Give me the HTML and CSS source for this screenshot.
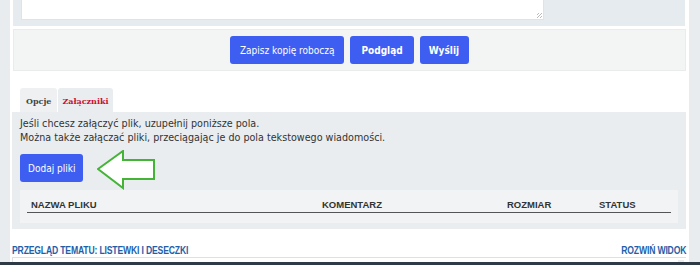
FILE: index.html
```html
<!DOCTYPE html>
<html lang="pl">
<head>
  <meta charset="UTF-8" />
  <title>Odpowiedz</title>
  <link rel="stylesheet" href="styles.css">
</head>
<body>
  <div class="page">

    <!-- Edytor -->
    <div class="editor">
      <div class="textarea"><span class="grip"></span></div>
    </div>

    <!-- Przyciski -->
    <div class="submit-bar">
      <button class="btn">Zapisz kopię roboczą</button>
      <button class="btn strong">Podgląd</button>
      <button class="btn strong">Wyślij</button>
    </div>

    <!-- Zakładki -->
    <ul class="tabs">
      <li class="tab">Opcje</li>
      <li class="tab active">Załączniki</li>
    </ul>

    <div class="panel">
      <p>Jeśli chcesz załączyć plik, uzupełnij poniższe pola.<br>
      Można także załączać pliki, przeciągając je do pola tekstowego wiadomości.</p>

      <div class="add-row">
        <button class="btn small">Dodaj pliki</button>
        <svg class="arrow" width="60" height="40" viewBox="0 0 60 40">
          <polygon points="1,19 26,1 26,10 57,10 57,29 26,29 26,38" fill="#fff" stroke="#44b437" stroke-width="2" />
        </svg>
      </div>

      <div class="files">
        <div class="files-head">
          <span class="col-name">Nazwa pliku</span>
          <span class="col-comment">Komentarz</span>
          <span class="col-size">Rozmiar</span>
          <span class="col-status">Status</span>
        </div>
      </div>
    </div>

    <!-- Przeglad tematu -->
    <div class="review">
      <a href="#" class="review-left">Przegląd tematu: Listewki i deseczki</a>
      <a href="#" class="review-right">Rozwiń widok</a>
    </div>
    <div class="review-box"><span class="scroll-up"></span></div>
  </div>
  <div class="taskbar"></div>
</body>
</html>
```

FILE: styles.css
```css
body {
  margin: 0;
  background-color: #e8ecef;
  font-family: "DejaVu Sans", Verdana, sans-serif;
  color: #333;
  width: 700px;
  height: 265px;
  overflow: hidden;
  position: relative;
}
.page {
  margin-left: 10px;
  width: 679px;
  height: 265px;
  background: #fff;
  padding: 0 3px 0 2px;
  box-sizing: border-box;
}
.editor {
  background: #e6ebef;
  height: 26px;
  padding: 0 141px 0 8px;
  margin: 0 1px 0 1px;
  box-sizing: border-box;
}
.textarea {
  position: relative;
  height: 20px;
  background: #fff;
  border: 1px solid #dfe3e6;
  border-top: none;
  box-sizing: border-box;
}
.grip {
  position: absolute;
  right: 1px;
  bottom: 1px;
  width: 5px;
  height: 5px;
  background: repeating-linear-gradient(135deg, transparent 0 1px, #bbb 1px 2px);
}
.submit-bar {
  margin: 3px 0 0 1px;
  background: #f3f4f4;
  border: 1px solid #e9ebec;
  height: 42px;
  box-sizing: border-box;
  display: flex;
  justify-content: center;
  align-items: center;
  gap: 6px;
}
.btn {
  background: #3d5ef0;
  color: #fff;
  border: none;
  border-radius: 3px;
  height: 28px;
  padding: 0 10px;
  font-family: "DejaVu Sans Condensed", "DejaVu Sans", sans-serif;
  font-size: 10px;
  cursor: pointer;
}
.btn.strong {
  font-weight: bold;
  padding: 0 11px 0 11px;
}
.btn.strong:last-child {
  padding: 0 10px 0 9px;
}
.tabs {
  list-style: none;
  margin: 17px 0 0 8px;
  padding: 0;
  display: flex;
  height: 24px;
}
.tab {
  background: #eef0f2;
  color: #444;
  font-family: "DejaVu Serif", Georgia, serif;
  font-weight: bold;
  font-size: 8px;
  padding: 0 6px;
  line-height: 26px;
  border-radius: 3px 3px 0 0;
}
.tab.active {
  background: #e9edef;
  color: #c8102e;
  margin-left: 1px;
  padding: 0 4px;
}
.panel {
  background: #e9edef;
  height: 117px;
  padding: 5px 8px 0 8px;
  box-sizing: border-box;
}
.panel p {
  margin: 0;
  font-size: 9.6px;
  line-height: 14px;
  color: #333;
}
.add-row {
  display: flex;
  align-items: flex-start;
  margin-top: 5px;
  height: 40px;
}
.btn.small {
  padding: 0 8px;
  margin-top: 4px;
}
.arrow {
  margin-left: 14px;
}
.files {
  background: #f1f3f4;
  height: 33px;
  padding: 0 7px;
}
.files-head {
  display: flex;
  border-bottom: 1px solid #555;
  height: 23px;
  align-items: flex-end;
  padding-bottom: 2px;
  box-sizing: border-box;
  font-family: "Liberation Sans", Arial, sans-serif;
  font-weight: bold;
  font-size: 9.5px;
  text-transform: uppercase;
  color: #333;
}
.col-name { padding-left: 4px; width: 291px; }
.col-comment { width: 185px; }
.col-size { width: 92px; }
.col-status { flex: 1; }
.review {
  display: flex;
  justify-content: space-between;
  align-items: center;
  height: 12px;
  margin-top: 15px;
}
.review a {
  display: inline-block;
  font-family: "Liberation Sans", Arial, sans-serif;
  font-weight: bold;
  font-size: 10.5px;
  letter-spacing: -0.2px;
  color: #1f5ea8;
  text-decoration: none;
  text-transform: uppercase;
  transform: scaleX(0.82);
}
.review-left { transform-origin: left center; }
.review-right { transform-origin: right center; }
.review-box {
  position: relative;
  margin-top: 1px;
  border-top: 1px solid #dde1e4;
  border-left: 1px solid #dde1e4;
  height: 8px;
}
.scroll-up {
  position: absolute;
  right: 2px;
  top: 2px;
  width: 6px;
  height: 6px;
  background: #eee;
}
.taskbar {
  position: absolute;
  left: 0;
  right: 0;
  bottom: 0;
  height: 3px;
  background: #2e3a45;
}
```
